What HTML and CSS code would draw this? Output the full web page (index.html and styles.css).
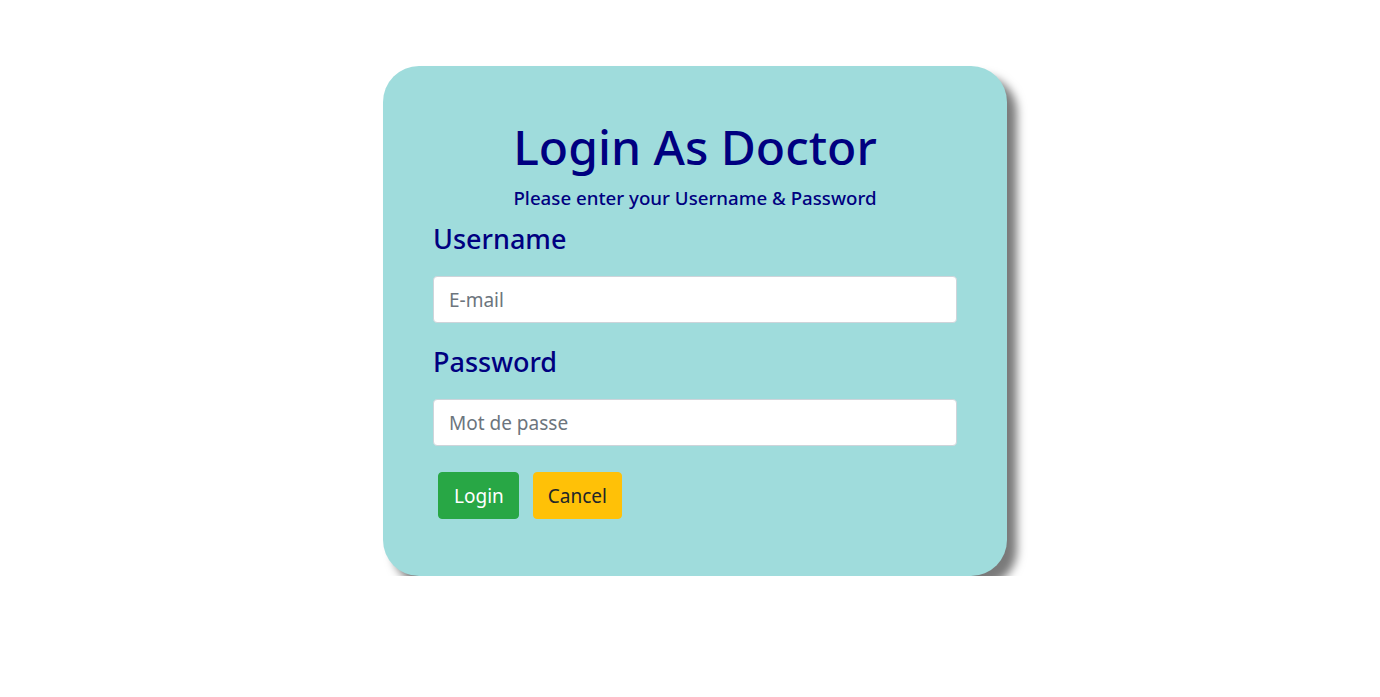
FILE: index.html
```html
<!DOCTYPE html>
<html lang="en">
<head>
<meta charset="utf-8">
<title>Login As Doctor</title>
<link rel="stylesheet" href="styles.css">
</head>
<body>
<main class="page">
  <form class="card">
    <h1 class="title">Login As Doctor</h1>
    <p class="subtitle">Please enter your Username &amp; Password</p>
    <label class="label" for="user">Username</label>
    <input class="field" id="user" type="text" placeholder="E-mail">
    <label class="label" for="pass">Password</label>
    <input class="field" id="pass" type="password" placeholder="Mot de passe">
    <div class="actions">
      <button type="button" class="btn btn-login">Login</button>
      <button type="button" class="btn btn-cancel">Cancel</button>
    </div>
  </form>
</main>
</body>
</html>
```

FILE: styles.css
```css
* { box-sizing: border-box; }
html, body { margin: 0; padding: 0; background: #fff; }
body { font-family: "Noto Sans", "Open Sans", sans-serif; }

.page {
  display: flex;
  justify-content: center;
  padding: 66px 0 0 10px;
}

.card {
  width: 624px;
  height: 510px;
  background: #9fdcdc;
  border-radius: 36px;
  box-shadow: 10px 10px 10px #7a7a7a;
  padding: 52px 50px 0 50px;
  display: flex;
  flex-direction: column;
}

.title {
  margin: 0;
  text-align: center;
  color: #000080;
  font-size: 48px;
  font-weight: 500;
  line-height: 58px;
}

.subtitle {
  margin: 10px 0 0;
  text-align: center;
  color: #000080;
  font-size: 18.7px;
  font-weight: 500;
  line-height: 24px;
}

.label {
  margin-top: 12px;
  color: #000080;
  font-size: 27px;
  font-weight: 500;
  line-height: 34px;
}

.field {
  margin-top: 20px;
  height: 47px;
  width: 100%;
  border: 1px solid #ced4da;
  border-radius: 4px;
  background: #fff;
  padding: 0 15px;
  font-family: inherit;
  font-size: 19px;
  color: #495057;
}
.field::placeholder { color: #6c757d; }

.field + .label { margin-top: 22px; }

.actions {
  display: flex;
  gap: 14px;
  margin: 26px 0 0 5px;
}

.btn {
  height: 47px;
  border: 1px solid transparent;
  border-radius: 4px;
  padding: 2px 14px 0;
  font-family: inherit;
  font-size: 19px;
  line-height: 1;
}
.btn-login { background: #28a745; color: #fff; border-color: #28a745; padding-left: 15px; }
.btn-cancel { background: #ffc107; color: #212529; border-color: #ffc107; }
```
